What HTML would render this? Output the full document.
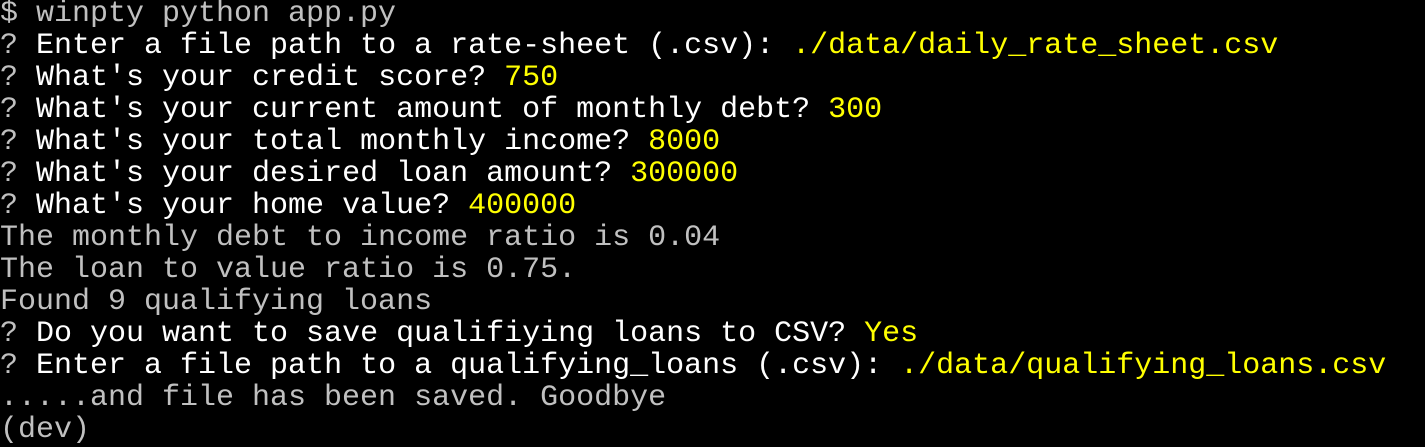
<!DOCTYPE html><html><head><style>
html,body{margin:0;background:#000;width:1425px;height:420px;overflow:hidden}
pre{margin:0;position:absolute;top:-2px;left:0;font-family:"Liberation Mono",monospace;font-size:30px;line-height:32px;color:#c0c0c0}
.w{color:#fff}.y{color:#ffff00}
</style></head><body><pre>$ winpty python app.py
? <span class="w">Enter a file path to a rate-sheet (.csv):</span> <span class="y">./data/daily_rate_sheet.csv</span>
? <span class="w">What's your credit score?</span> <span class="y">750</span>
? <span class="w">What's your current amount of monthly debt?</span> <span class="y">300</span>
? <span class="w">What's your total monthly income?</span> <span class="y">8000</span>
? <span class="w">What's your desired loan amount?</span> <span class="y">300000</span>
? <span class="w">What's your home value?</span> <span class="y">400000</span>
The monthly debt to income ratio is 0.04
The loan to value ratio is 0.75.
Found 9 qualifying loans
? <span class="w">Do you want to save qualifiying loans to CSV?</span> <span class="y">Yes</span>
? <span class="w">Enter a file path to a qualifying_loans (.csv):</span> <span class="y">./data/qualifying_loans.csv</span>
.....and file has been saved. Goodbye
(dev)</pre></body></html>
